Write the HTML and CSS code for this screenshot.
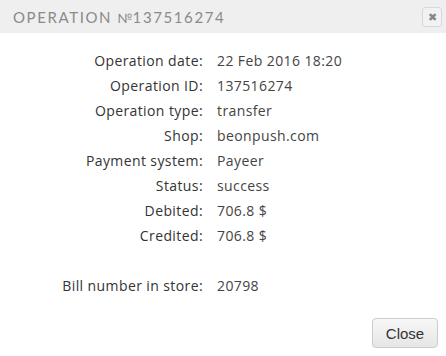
FILE: index.html
```html
<!DOCTYPE html>
<html lang="en">
<head>
    <meta charset="UTF-8">
    <title>Operation</title>
    <link rel="stylesheet" href="styles.css">
</head>
<body>
    <div class="modal">
        <div class="modal-header">
            <h3>Operation <span class="num-sign">№</span>137516274</h3>
            <button class="close-x">&#10006;</button>
        </div>
        <div class="modal-body">
            <div class="details">
                <span class="label">Operation date:</span><span class="value">22 Feb 2016 18:20</span>
                <span class="label">Operation ID:</span><span class="value">137516274</span>
                <span class="label">Operation type:</span><span class="value">transfer</span>
                <span class="label">Shop:</span><span class="value">beonpush.com</span>
                <span class="label">Payment system:</span><span class="value">Payeer</span>
                <span class="label">Status:</span><span class="value">success</span>
                <span class="label">Debited:</span><span class="value">706.8 $</span>
                <span class="label">Credited:</span><span class="value">706.8 $</span>
                <span class="spacer"></span><span class="spacer"></span>
                <span class="label">Bill number in store:</span><span class="value">20798</span>
            </div>
        </div>
        <div class="modal-footer">
            <button class="btn">Close</button>
        </div>
    </div>
</body>
</html>
```

FILE: styles.css
```css
body {
    margin: 0;
    background: #fff;
    font-family: "Open Sans", sans-serif;
}
.modal {
    width: 446px;
    height: 356px;
    display: flex;
    flex-direction: column;
}
.modal-header {
    height: 33px;
    background: #efefef;
    display: flex;
    align-items: center;
    justify-content: space-between;
    padding: 0 4px 0 13px;
}
.modal-header h3 {
    margin: 0;
    font-family: "Lato", sans-serif;
    font-size: 15px;
    font-weight: normal;
    letter-spacing: 1.6px;
    text-transform: uppercase;
    color: #8a8a8a;
}
.num-sign {
    letter-spacing: 0;
    font-size: 13px;
}
.close-x {
    width: 20px;
    height: 20px;
    padding: 0;
    background: #f2f2f2;
    border: 1px solid #d8d8d8;
    border-radius: 3px;
    color: #888;
    font-size: 11px;
    line-height: 18px;
}
.modal-body {
    flex: 1;
    padding-top: 15px;
}
.details {
    display: grid;
    grid-template-columns: 203px auto;
    column-gap: 14px;
    font-size: 14px;
    line-height: 25px;
    letter-spacing: 0.4px;
    color: #333;
}
.label {
    text-align: right;
}
.value {
    color: #444;
}
.spacer {
    height: 25px;
}
.modal-footer {
    display: flex;
    justify-content: flex-end;
    padding: 0 8px 8px 0;
}
.btn {
    width: 66px;
    height: 30px;
    font-family: "Liberation Sans", Arial, sans-serif;
    font-size: 15px;
    color: #333;
    background: linear-gradient(#f7f7f7, #e6e6e6);
    border: 1px solid #ccc;
    border-radius: 4px;
}
```
